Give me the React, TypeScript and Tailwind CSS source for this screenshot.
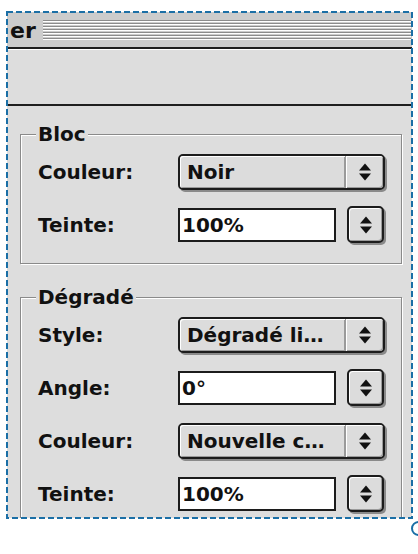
import React from "react";

const font = { fontFamily: '"DejaVu Sans", Verdana, sans-serif' };

function Arrows() {
  return (
    <svg width="14" height="20" viewBox="0 0 14 20">
      <polygon points="1,8.5 7,1.5 13,8.5" fill="#111" />
      <polygon points="1,11.5 7,18.5 13,11.5" fill="#111" />
    </svg>
  );
}

function Popup({ text }: { text: string }) {
  return (
    <div className="flex h-[36px] w-[207px] rounded-[5px] border-2 border-[#1c1c1c] bg-[#dcdcdc] shadow-[2px_2px_0_#8a8a8a]">
      <div className="flex min-w-0 flex-1 items-center overflow-hidden whitespace-nowrap rounded-l-[3px] pl-[7px] text-[20px] font-bold text-[#111] shadow-[inset_1px_1px_0_#fff,inset_-1px_-1px_0_#9a9a9a]">
        {text}
      </div>
      <div className="flex w-[38px] items-center justify-center rounded-r-[3px] border-l border-[#9a9a9a] shadow-[inset_1px_1px_0_#fff,inset_-1px_-1px_0_#9a9a9a]">
        <Arrows />
      </div>
    </div>
  );
}

function Field({ text }: { text: string }) {
  return (
    <div className="flex items-center gap-[11px]">
      <div className="flex h-[34px] w-[158px] items-center border-2 border-[#1c1c1c] bg-white pl-[2px] text-[20px] font-bold text-[#111]">
        {text}
      </div>
      <div className="flex h-[37px] w-[37px] items-center justify-center rounded-[5px] border-2 border-[#1c1c1c] bg-[#dcdcdc] shadow-[inset_1px_1px_0_#fff,inset_-1px_-1px_0_#9a9a9a,2px_2px_0_#8a8a8a]">
        <Arrows />
      </div>
    </div>
  );
}

function Row({ label, children }: { label: string; children: React.ReactNode }) {
  return (
    <div className="flex h-[53px] shrink-0 items-center">
      <div className="w-[140px] text-[20px] font-bold text-[#111]">{label}</div>
      {children}
    </div>
  );
}

function Group({ title, children }: { title: string; children: React.ReactNode }) {
  return (
    <div className="relative ml-[13px] mr-[10px] shrink-0 border border-[#8a8a8a] pb-[12px] pl-[17px] pt-[10px] shadow-[inset_1px_1px_0_#fff,1px_1px_0_#fff]">
      <div className="absolute left-[15px] top-[-13px] bg-[#dddddd] px-[2px] text-[20px] font-bold leading-[24px] text-[#111]">
        {title}
      </div>
      {children}
    </div>
  );
}

export default function App() {
  return (
    <div className="relative h-[554px] w-[418px] overflow-hidden bg-white" style={font}>
      <div className="ml-[7px] mt-[12px] flex h-[506px] w-[405px] flex-col overflow-hidden bg-[#dddddd]">
        <div className="flex h-[35px] shrink-0 items-center bg-[#cccccc]">
          <div className="pl-[3px] pt-[3px] text-[22px] font-bold leading-none text-[#111]">er</div>
          <div className="ml-[7px] mr-[1px] flex flex-1 flex-col gap-[1px]">
            {[0, 1, 2, 3, 4, 5, 6].map((i) => (
              <div key={i} className="flex flex-col">
                <div className="h-[1px] bg-[#8c8c8c]" />
                <div className="h-[1px] bg-white" />
              </div>
            ))}
          </div>
        </div>
        <div className="h-[2px] shrink-0 bg-[#1e1e1e]" />
        <div className="h-[1px] shrink-0 bg-white" />
        <div className="h-[54px] shrink-0" />
        <div className="h-[2px] shrink-0 bg-[#1e1e1e]" />
        <div className="h-[28px] shrink-0" />
        <Group title="Bloc">
          <Row label="Couleur:">
            <Popup text="Noir" />
          </Row>
          <Row label="Teinte:">
            <Field text="100%" />
          </Row>
        </Group>
        <div className="h-[33px] shrink-0" />
        <Group title="Dégradé">
          <Row label="Style:">
            <Popup text="Dégradé li…" />
          </Row>
          <Row label="Angle:">
            <Field text="0°" />
          </Row>
          <Row label="Couleur:">
            <Popup text="Nouvelle c…" />
          </Row>
          <Row label="Teinte:">
            <Field text="100%" />
          </Row>
        </Group>
      </div>
      <svg className="absolute left-0 top-0" width="418" height="554">
        <rect x="7" y="12" width="405" height="506" fill="none" stroke="#1b6fa6" strokeWidth="2" strokeDasharray="6 3" />
      </svg>
      <div className="absolute left-[411px] top-[521px] h-[15px] w-[15px] rounded-full border-2 border-[#1b6fa6] bg-white" />
    </div>
  );
}
